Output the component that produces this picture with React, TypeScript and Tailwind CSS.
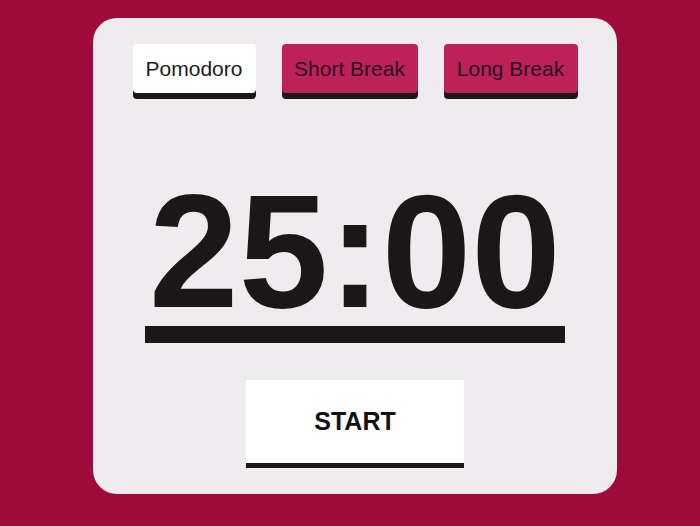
export default function App() {
  const font = { fontFamily: '"Liberation Sans", Arial, sans-serif' };
  return (
    <div className="w-[700px] h-[526px] bg-[#9e0b3b] overflow-hidden" style={font}>
      <div className="ml-[93px] mt-[18px] w-[524px] h-[476px] bg-[#eeecef] rounded-[24px] flex flex-col items-center">
        <div className="flex gap-[26px] pt-[26px]">
          <button className="h-[49px] w-[123px] bg-white rounded-[4px] shadow-[0_6px_0_#1a1718] text-[21px] text-[#1c1a1c]">
            Pomodoro
          </button>
          <button className="h-[49px] w-[136px] bg-[#bc2157] rounded-[4px] shadow-[0_6px_0_#1a1718] text-[21px] text-[#2a1020]">
            Short Break
          </button>
          <button className="h-[49px] w-[134px] bg-[#bc2157] rounded-[4px] shadow-[0_6px_0_#1a1718] text-[21px] text-[#2a1020]">
            Long Break
          </button>
        </div>
        <div className="mt-[88px] text-[161px] leading-[140px] font-bold text-[#1a1718]">25:00</div>
        <div className="mt-[5px] w-[420px] h-[17px] bg-[#1a1718]" />
        <button className="mt-[37px] w-[218px] h-[83px] bg-white shadow-[0_5px_0_#1a1718] text-[25px] font-bold text-[#111]">
          START
        </button>
      </div>
    </div>
  );
}
